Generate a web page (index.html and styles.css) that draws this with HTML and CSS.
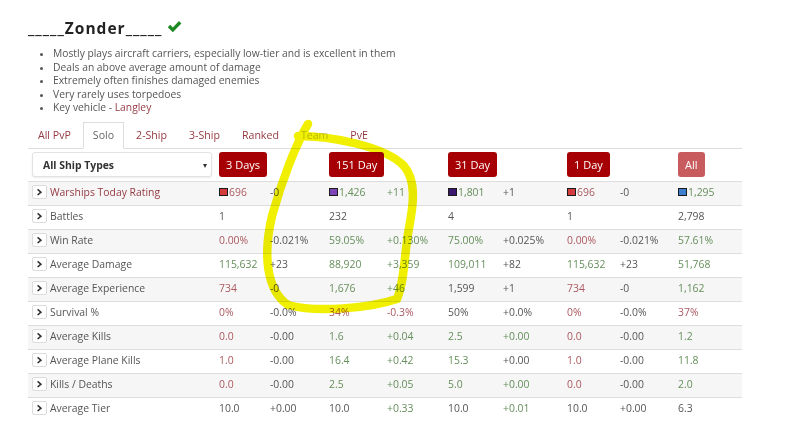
FILE: index.html
```html
<!DOCTYPE html>
<html>
<head>
<meta charset="utf-8">
<link rel="stylesheet" href="styles.css">
</head>
<body>
<div class="page">
  <h1 class="name">_____Zonder_____ <svg class="check" viewBox="0 0 15 13" width="15" height="13"><path d="M0.8 7.2 L3.2 4.8 L5.8 7.4 L12 1 L14.4 3.4 L5.8 12.2 Z" fill="#1f8a24"/></svg></h1>
  <ul class="traits">
    <li>Mostly plays aircraft carriers, especially low-tier and is excellent in them</li>
    <li>Deals an above average amount of damage</li>
    <li>Extremely often finishes damaged enemies</li>
    <li>Very rarely uses torpedoes</li>
    <li>Key vehicle - <span class="link">Langley</span></li>
  </ul>
  <nav class="tabs">
    <span class="tab">All PvP</span>
    <span class="tab active">Solo</span>
    <span class="tab">2-Ship</span>
    <span class="tab">3-Ship</span>
    <span class="tab">Ranked</span>
    <span class="tab disabled">Team</span>
    <span class="tab">PvE</span>
  </nav>
  <div class="stats">
    <div class="row head">
      <div class="lab"><div class="select">All Ship Types<span class="caret">▾</span></div></div>
      <div class="span2"><span class="btn">3 Days</span></div>
      <div class="span2"><span class="btn">151 Day</span></div>
      <div class="span2"><span class="btn">31 Day</span></div>
      <div class="span2"><span class="btn">1 Day</span></div>
      <div><span class="btn faded">All</span></div>
    </div>
    <div class="row">
      <div class="lab"><span class="exp"><svg viewBox="0 0 15 14" width="15" height="14"><path d="M5.6 4.4 L8.9 7.2 L5.6 10" fill="none" stroke="#333" stroke-width="1.6"/></svg></span><span class="link">Warships Today Rating</span></div>
      <div class="r"><span class="sw s-red"></span>696</div><div>-0</div>
      <div class="g"><span class="sw s-purple"></span>1,426</div><div class="g">+11</div>
      <div class="g"><span class="sw s-dark"></span>1,801</div><div>+1</div>
      <div class="r"><span class="sw s-red"></span>696</div><div>-0</div>
      <div class="g"><span class="sw s-blue"></span>1,295</div>
    </div>
    <div class="row">
      <div class="lab"><span class="exp"><svg viewBox="0 0 15 14" width="15" height="14"><path d="M5.6 4.4 L8.9 7.2 L5.6 10" fill="none" stroke="#333" stroke-width="1.6"/></svg></span>Battles</div>
      <div>1</div><div></div><div>232</div><div></div><div>4</div><div></div><div>1</div><div></div><div>2,798</div>
    </div>
    <div class="row">
      <div class="lab"><span class="exp"><svg viewBox="0 0 15 14" width="15" height="14"><path d="M5.6 4.4 L8.9 7.2 L5.6 10" fill="none" stroke="#333" stroke-width="1.6"/></svg></span>Win Rate</div>
      <div class="r">0.00%</div><div>-0.021%</div><div class="g">59.05%</div><div class="g">+0.130%</div><div class="g">75.00%</div><div>+0.025%</div><div class="r">0.00%</div><div>-0.021%</div><div class="g">57.61%</div>
    </div>
    <div class="row">
      <div class="lab"><span class="exp"><svg viewBox="0 0 15 14" width="15" height="14"><path d="M5.6 4.4 L8.9 7.2 L5.6 10" fill="none" stroke="#333" stroke-width="1.6"/></svg></span>Average Damage</div>
      <div class="g">115,632</div><div>+23</div><div class="g">88,920</div><div class="g">+3,359</div><div class="g">109,011</div><div>+82</div><div class="g">115,632</div><div>+23</div><div class="g">51,768</div>
    </div>
    <div class="row">
      <div class="lab"><span class="exp"><svg viewBox="0 0 15 14" width="15" height="14"><path d="M5.6 4.4 L8.9 7.2 L5.6 10" fill="none" stroke="#333" stroke-width="1.6"/></svg></span>Average Experience</div>
      <div class="r">734</div><div>-0</div><div class="g">1,676</div><div class="g">+46</div><div>1,599</div><div>+1</div><div class="r">734</div><div>-0</div><div class="g">1,162</div>
    </div>
    <div class="row">
      <div class="lab"><span class="exp"><svg viewBox="0 0 15 14" width="15" height="14"><path d="M5.6 4.4 L8.9 7.2 L5.6 10" fill="none" stroke="#333" stroke-width="1.6"/></svg></span>Survival %</div>
      <div class="r">0%</div><div>-0.0%</div><div class="r">34%</div><div class="r">-0.3%</div><div>50%</div><div>+0.0%</div><div class="r">0%</div><div>-0.0%</div><div class="r">37%</div>
    </div>
    <div class="row">
      <div class="lab"><span class="exp"><svg viewBox="0 0 15 14" width="15" height="14"><path d="M5.6 4.4 L8.9 7.2 L5.6 10" fill="none" stroke="#333" stroke-width="1.6"/></svg></span>Average Kills</div>
      <div class="r">0.0</div><div>-0.00</div><div class="g">1.6</div><div class="g">+0.04</div><div class="g">2.5</div><div class="g">+0.00</div><div class="r">0.0</div><div>-0.00</div><div class="g">1.2</div>
    </div>
    <div class="row">
      <div class="lab"><span class="exp"><svg viewBox="0 0 15 14" width="15" height="14"><path d="M5.6 4.4 L8.9 7.2 L5.6 10" fill="none" stroke="#333" stroke-width="1.6"/></svg></span>Average Plane Kills</div>
      <div class="r">1.0</div><div>-0.00</div><div class="g">16.4</div><div class="g">+0.42</div><div class="g">15.3</div><div>+0.00</div><div class="r">1.0</div><div>-0.00</div><div class="g">11.8</div>
    </div>
    <div class="row">
      <div class="lab"><span class="exp"><svg viewBox="0 0 15 14" width="15" height="14"><path d="M5.6 4.4 L8.9 7.2 L5.6 10" fill="none" stroke="#333" stroke-width="1.6"/></svg></span>Kills / Deaths</div>
      <div class="r">0.0</div><div>-0.00</div><div class="g">2.5</div><div class="g">+0.05</div><div class="g">5.0</div><div class="g">+0.00</div><div class="r">0.0</div><div>-0.00</div><div class="g">2.0</div>
    </div>
    <div class="row">
      <div class="lab"><span class="exp"><svg viewBox="0 0 15 14" width="15" height="14"><path d="M5.6 4.4 L8.9 7.2 L5.6 10" fill="none" stroke="#333" stroke-width="1.6"/></svg></span>Average Tier</div>
      <div>10.0</div><div>+0.00</div><div>10.0</div><div class="g">+0.33</div><div>10.0</div><div class="g">+0.01</div><div>10.0</div><div>+0.00</div><div>6.3</div>
    </div>
  </div>
  <svg class="scribble" viewBox="0 0 800 421" width="800" height="421">
    <path d="M308 106 C 296 126 282 162 272 198 C 263 236 266 272 288 287 C 318 295 370 290 397 281 C 405 262 404 236 409 210 C 414 184 416 162 404 148 C 385 128 330 118 298 118" fill="none" stroke="#f1f000" stroke-width="8.5" stroke-linecap="round" stroke-linejoin="round"/>
  </svg>
</div>
</body>
</html>
```
FILE: styles.css
```css
html, body {
  margin: 0;
  padding: 0;
  background: #fff;
}
body {
  font-family: "Open Sans", "Liberation Sans", sans-serif;
  font-size: 10.4px;
  color: #555;
  overflow: hidden;
}
.page {
  position: relative;
  width: 714px;
  height: 421px;
  padding-left: 28px;
}
.name {
  margin: 18px 0 0 0;
  font-size: 15.5px;
  line-height: 20px;
  font-weight: 700;
  color: #222;
  letter-spacing: 1px;
  display: flex;
  align-items: center;
  gap: 4px;
}
.check {
  display: block;
  margin-top: -3px;
}
.traits {
  margin: 9px 0 0 0;
  padding-left: 25px;
  line-height: 13.6px;
  font-size: 10.3px;
  color: #555;
}
.traits li::marker {
  font-size: 9px;
}
.link {
  color: #953a42;
}
.tabs {
  display: flex;
  margin-top: 7px;
  border-bottom: 1px solid #ddd;
  height: 26px;
}
.tab {
  padding: 0 9px;
  margin-right: 2px;
  line-height: 25px;
  height: 25px;
  border: 1px solid transparent;
  color: #953a42;
  font-size: 10.6px;
}
.tab.active {
  border-color: #ddd;
  border-bottom-color: #fff;
  background: #fff;
  color: #666;
}
.tab.disabled {
  color: #c4c4c4;
}
.stats {
  display: flex;
  flex-direction: column;
}
.row {
  display: grid;
  grid-template-columns: 191px 51px 59px 58px 61px 55px 64px 53px 58px 64px;
  height: 24px;
  box-sizing: border-box;
  border-top: 1px solid #ddd;
  padding-bottom: 3px;
  align-items: center;
  white-space: nowrap;
}
.row:nth-child(even) {
  background: #f6f6f6;
}
.row.head {
  height: 32px;
  padding-bottom: 0;
  border-top: none;
  background: #fff;
}
.span2 {
  grid-column: span 2;
}
.lab {
  display: flex;
  align-items: center;
  padding-left: 4px;
  color: #555;
}
.select {
  width: 180px;
  height: 25px;
  box-sizing: border-box;
  border: 1px solid #e2e2e2;
  border-radius: 3px;
  box-shadow: 0 1px 2px rgba(0,0,0,0.08);
  background: #fff;
  display: flex;
  align-items: center;
  justify-content: space-between;
  padding: 0 4px 0 10px;
  font-weight: 700;
  color: #333;
  font-size: 10.4px;
}
.caret {
  font-size: 8px;
  color: #333;
  font-weight: 400;
}
.btn {
  display: inline-block;
  height: 25px;
  line-height: 25px;
  padding: 0 7px;
  border-radius: 3px;
  background: #a60004;
  color: #fff;
  font-size: 11px;
}
.btn.faded {
  background: #c85b5e;
}
.exp {
  display: inline-block;
  width: 15px;
  height: 14px;
  box-sizing: border-box;
  border: 1px solid #dcdcdc;
  border-radius: 2px;
  background: #fff;
  margin-right: 3px;
}
.exp svg {
  display: block;
  margin: -1px;
}
.r {
  color: #ab585e;
}
.g {
  color: #658f5b;
}
.sw {
  display: inline-block;
  width: 9px;
  height: 8px;
  box-sizing: border-box;
  border: 1px solid #1a1a1a;
  margin-right: 1px;
  vertical-align: 0px;
}
.s-red { background: #d23c3c; }
.s-purple { background: #7d44b8; }
.s-dark { background: #3a1870; }
.s-blue { background: #3f7fd0; }
.scribble {
  position: absolute;
  left: 0;
  top: 0;
  pointer-events: none;
  mix-blend-mode: multiply;
}
```
